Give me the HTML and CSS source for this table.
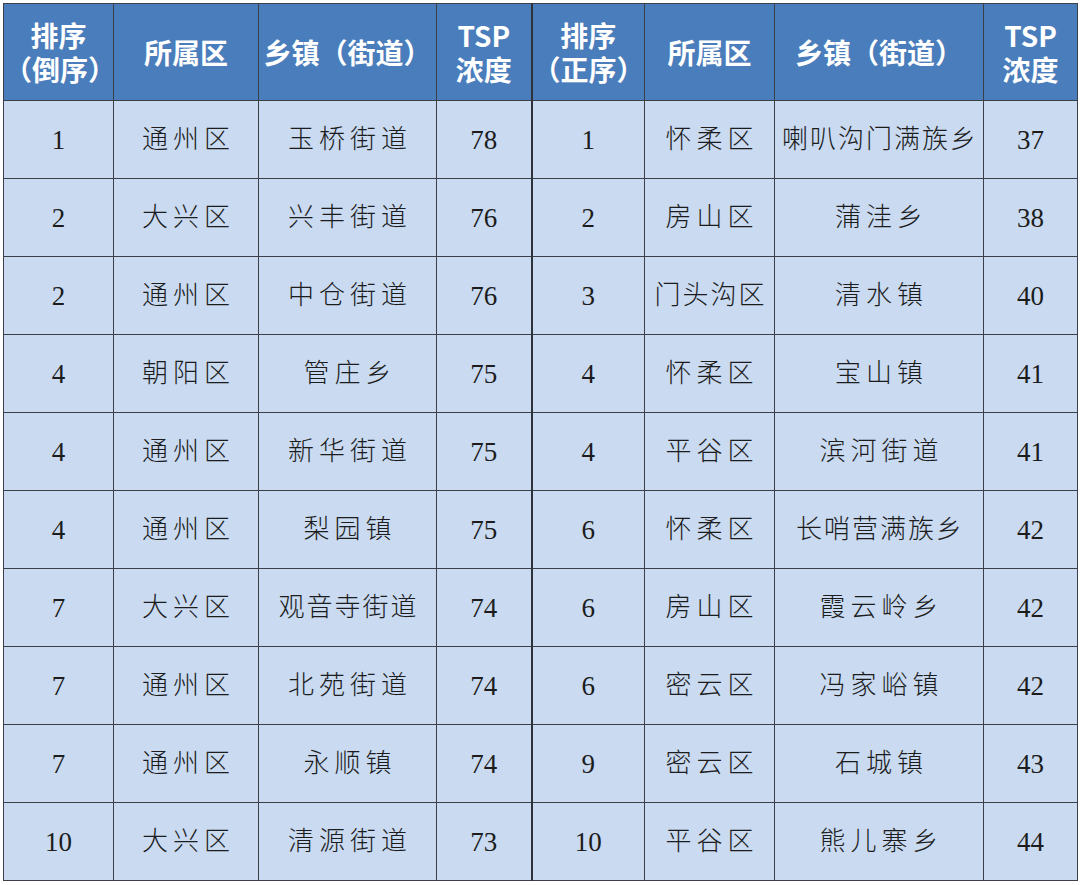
FILE: index.html
```html
<!DOCTYPE html>
<html lang="zh">
<head>
<meta charset="utf-8">
<link rel="stylesheet" href="styles.css">
</head>
<body>
<table class="tsp">
  <colgroup>
    <col class="c1"><col class="c2"><col class="c3"><col class="c4">
    <col class="c5"><col class="c6"><col class="c7"><col class="c8">
  </colgroup>
  <thead>
    <tr>
      <th><span class="ln">排序</span><span class="ln">（倒序）</span></th><th>所属区</th><th>乡镇（街道）</th><th class="mid"><span class="ln">TSP</span><span class="ln">浓度</span></th>
      <th><span class="ln">排序</span><span class="ln">（正序）</span></th><th>所属区</th><th>乡镇（街道）</th><th><span class="ln">TSP</span><span class="ln">浓度</span></th>
    </tr>
  </thead>
  <tbody>
    <tr><td class="n">1</td><td>通州区</td><td>玉桥街道</td><td class="n mid">78</td><td class="n">1</td><td>怀柔区</td><td class="tight">喇叭沟门满族乡</td><td class="n">37</td></tr>
    <tr><td class="n">2</td><td>大兴区</td><td>兴丰街道</td><td class="n mid">76</td><td class="n">2</td><td>房山区</td><td>蒲洼乡</td><td class="n">38</td></tr>
    <tr><td class="n">2</td><td>通州区</td><td>中仓街道</td><td class="n mid">76</td><td class="n">3</td><td class="tight">门头沟区</td><td>清水镇</td><td class="n">40</td></tr>
    <tr><td class="n">4</td><td>朝阳区</td><td>管庄乡</td><td class="n mid">75</td><td class="n">4</td><td>怀柔区</td><td>宝山镇</td><td class="n">41</td></tr>
    <tr><td class="n">4</td><td>通州区</td><td>新华街道</td><td class="n mid">75</td><td class="n">4</td><td>平谷区</td><td>滨河街道</td><td class="n">41</td></tr>
    <tr><td class="n">4</td><td>通州区</td><td>梨园镇</td><td class="n mid">75</td><td class="n">6</td><td>怀柔区</td><td class="tight">长哨营满族乡</td><td class="n">42</td></tr>
    <tr><td class="n">7</td><td>大兴区</td><td class="tight">观音寺街道</td><td class="n mid">74</td><td class="n">6</td><td>房山区</td><td>霞云岭乡</td><td class="n">42</td></tr>
    <tr><td class="n">7</td><td>通州区</td><td>北苑街道</td><td class="n mid">74</td><td class="n">6</td><td>密云区</td><td>冯家峪镇</td><td class="n">42</td></tr>
    <tr><td class="n">7</td><td>通州区</td><td>永顺镇</td><td class="n mid">74</td><td class="n">9</td><td>密云区</td><td>石城镇</td><td class="n">43</td></tr>
    <tr><td class="n">10</td><td>大兴区</td><td>清源街道</td><td class="n mid">73</td><td class="n">10</td><td>平谷区</td><td>熊儿寨乡</td><td class="n">44</td></tr>
  </tbody>
</table>
</body>
</html>
```

FILE: styles.css
```css
html, body {
  margin: 0;
  padding: 0;
  background: #ffffff;
}
body {
  padding: 3px 0 0 3px;
}
.tsp {
  border-collapse: collapse;
  table-layout: fixed;
  width: 1074px;
}
.c1 { width: 110px; }
.c2 { width: 145px; }
.c3 { width: 178px; }
.c4 { width: 95px; }
.c5 { width: 113px; }
.c6 { width: 130px; }
.c7 { width: 209px; }
.c8 { width: 94px; }
.tsp th, .tsp td {
  border: 1px solid #3b3f47;
  text-align: center;
  vertical-align: middle;
  padding: 0;
  white-space: nowrap;
}
.tsp th.mid, .tsp td.mid {
  border-right: 2px solid #2e323a;
}
.tsp thead th {
  height: 96px;
  background: #4a7dbb;
  color: #ffffff;
  font-family: "Noto Sans CJK SC", "Liberation Sans", sans-serif;
  font-weight: 700;
  font-size: 28px;
  line-height: 34px;
}
.ln {
  display: block;
}
.tsp tbody td {
  height: 77px;
  background: #c9daf1;
  color: #1c1c1c;
  font-family: "Liberation Serif", "Noto Sans CJK SC", serif;
  font-weight: 300;
  font-size: 26px;
  line-height: 34px;
  letter-spacing: 5px;
  text-indent: 5px;
}
.tsp tbody td.tight {
  letter-spacing: 2px;
  text-indent: 2px;
}
.tsp tbody td.n {
  font-size: 27px;
  letter-spacing: 0;
  text-indent: 0;
  font-weight: 400;
  line-height: 38px;
}
```
